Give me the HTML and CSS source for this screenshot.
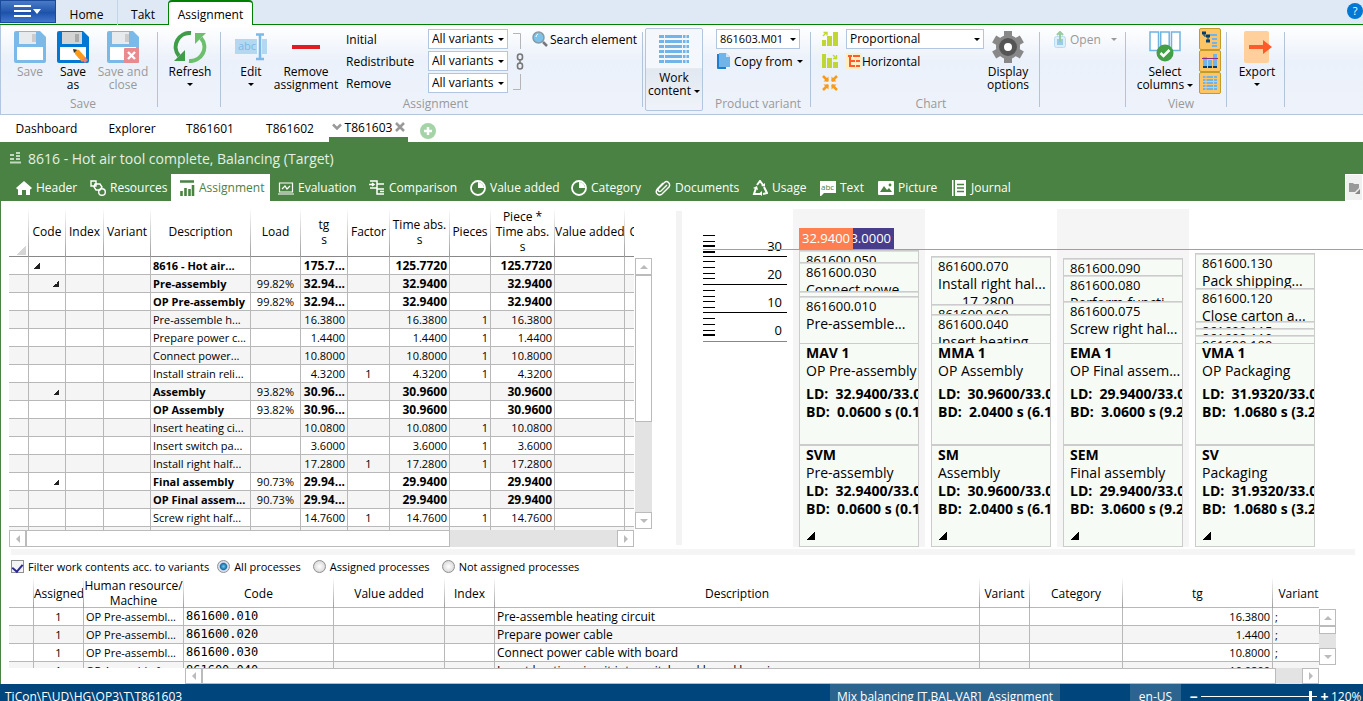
FILE: index.html
```html
<!DOCTYPE html>
<html lang="en">
<head>
<meta charset="utf-8">
<title>TiCon - Assignment</title>
<link rel="stylesheet" href="styles.css">
</head>
<body>
<div class="app">
<header class="menubar">
  <button class="app-menu" aria-label="Application menu"><svg width="28" height="14" viewBox="0 0 28 14"><path d="M0 1h17M0 6h17M0 11h17" stroke="#fff" stroke-width="2"/><path d="M19 4h8l-4 5z" fill="#fff"/></svg></button>
  <nav class="menu-tabs"><a href="#" class="m-home">Home</a><a href="#" class="m-takt">Takt</a><a href="#" class="m-active">Assignment</a></nav>
  <button class="help" aria-label="Help">?</button>
</header>

<div class="ribbon">
  <section class="group g-save">
    <div class="tools">
      <button class="big off w44"><svg width="32" height="32" viewBox="0 0 32 32"><path d="M2 0h24l6 6v24q0 2-2 2H2q-2 0-2-2V2q0-2 2-2z" fill="#7bb9e8"/><path d="M5 1h17v12H5z" fill="#e8ebee"/><path d="M18 3h4v8h-4z" fill="#ccc"/><path d="M3 16h26v13H3z" fill="#fff"/></svg><span>Save</span></button>
      <button class="big w42"><svg width="32" height="32" viewBox="0 0 32 32"><path d="M2 0h24l6 6v24q0 2-2 2H2q-2 0-2-2V2q0-2 2-2z" fill="#0078d4"/><path d="M5 1h20v12H5z" fill="#d4d4d4"/><path d="M18 3h4v8h-4z" fill="#aaa"/><path d="M3 16h26v13H3z" fill="#fff"/><path d="M17 18l5 1 7 8-4 4-7-8z" fill="#fb9a1a"/><path d="M16 18l4 1-3 3z" fill="#333"/><path d="M28 26l3 3-3 3-3-3z" fill="#e88080"/></svg><span>Save<br>as</span></button>
      <button class="big off w58"><svg width="32" height="32" viewBox="0 0 32 32"><path d="M2 0h24l6 6v24q0 2-2 2H2q-2 0-2-2V2q0-2 2-2z" fill="#7bb9e8"/><path d="M5 1h17v12H5z" fill="#e8ebee"/><path d="M18 3h4v8h-4z" fill="#ccc"/><path d="M3 16h26v13H3z" fill="#fff"/><rect x="17" y="17" width="15" height="15" rx="1" fill="#e88a8e"/><path d="M21 21l7 7M28 21l-7 7" stroke="#fff" stroke-width="2.4"/></svg><span>Save and<br>close</span></button>
    </div>
    <h2>Save</h2>
  </section>
  <section class="group g-refresh">
    <div class="tools"><button class="big w60"><svg width="34" height="32" viewBox="0 0 34 32"><path d="M18 2A14 14 0 0 0 6 25" fill="none" stroke="#3f9c4b" stroke-width="4"/><path d="M12 19v11H1z" fill="#3f9c4b"/><path d="M16 30A14 14 0 0 0 28 7" fill="none" stroke="#6cbf6c" stroke-width="4"/><path d="M22 13V2h11z" fill="#6cbf6c"/></svg><span>Refresh</span><i class="caret"></i></button></div>
  </section>
  <section class="group g-assign">
    <div class="tools">
      <button class="big w46"><svg width="32" height="32" viewBox="0 0 32 32"><path d="M0 8h22v15H0zM27 8h5v15h-5z" fill="#b5d8f1"/><text x="3" y="19" class="t-abc">abc</text><path d="M21 3.500h8M25 4v24M21 28h8" stroke="#7bb9e8" stroke-width="2.500" fill="none"/></svg><span>Edit</span><i class="caret"></i></button>
      <button class="big w64"><svg width="32" height="32" viewBox="0 0 32 32"><path d="M2 14h28v4H2z" fill="#e31b23"/></svg><span>Remove<br>assignment</span></button>
      <div class="form">
        <label for="v1">Initial</label><span class="sel"><select id="v1"><option>All variants</option></select></span>
        <label for="v2">Redistribute</label><span class="sel"><select id="v2"><option>All variants</option></select></span>
        <label for="v3">Remove</label><span class="sel"><select id="v3"><option>All variants</option></select></span>
      </div>
      <svg class="link-icon" width="12" height="60" viewBox="0 0 12 60"><path d="M0 1.500h7.500V17M0 57.500h7.500V42" fill="none" stroke="#b5b5b5"/><rect x="4.500" y="22" width="5" height="6" rx="2.500" fill="none" stroke="#777" stroke-width="1.600"/><rect x="4.500" y="31" width="5" height="6" rx="2.500" fill="none" stroke="#777" stroke-width="1.600"/><path d="M7 27v5" stroke="#777" stroke-width="1.500"/></svg>
      <button class="small search"><svg width="16" height="16" viewBox="0 0 16 16"><path d="M11 11l4 4" stroke="#777" stroke-width="2.500"/><circle cx="6.500" cy="6.500" r="5.500" fill="#7bc3ec" stroke="#8a9aa5" stroke-width="1.500"/><path d="M4 6q0-2 2-3" stroke="#fff" fill="none"/></svg>Search element</button>
    </div>
    <h2>Assignment</h2>
  </section>
  <section class="group g-variant">
    <div class="tools">
      <button class="big checked"><svg width="30" height="29" viewBox="0 0 30 29"><path d="M0 1.500h30M0 6.500h30M0 11.500h30M0 16.500h30M0 21.500h30M0 26.500h30" stroke="#70b4e8" stroke-width="3"/><path d="M5.500 0v29M23.500 0v29M27 0v29" stroke="#eef3fa"/></svg><span>Work<br>content <i class="caret"></i></span></button>
      <div class="stack variant">
        <span class="sel"><select aria-label="Product variant"><option>861603.M01</option></select></span>
        <button class="small"><svg width="13" height="16" viewBox="0 0 13 16"><path d="M0 1h9v15H1q-1 0-1-1z" fill="#1a7fd0"/><path d="M2 0h7l4 4v10H2z" fill="#70b4e8"/><path d="M9 0l4 4H9z" fill="#cfe6f7"/></svg>Copy from <i class="caret"></i></button>
      </div>
    </div>
    <h2 class="h-variant">Product variant</h2>
  </section>
  <section class="group g-chart">
    <div class="tools">
      <div class="stack icons">
        <button class="ico" aria-label="Sort ascending"><svg width="16" height="16" viewBox="0 0 16 16"><path d="M0 9h4v6H0zM5 5h5v10H5zM11 1h5v14h-5z" fill="#bfd730"/><path d="M1 5l3-3M1.500 1.500H5v3" stroke="#bfd730" stroke-width="1.400" fill="none"/></svg></button>
        <button class="ico" aria-label="Sort descending"><svg width="16" height="16" viewBox="0 0 16 16"><path d="M0 1h4v14H0zM5 5h5v10H5zM11 9h5v6h-5z" fill="#bfd730"/><path d="M11 2l3 3M11 5.500h3.500V2" stroke="#bfd730" stroke-width="1.400" fill="none"/></svg></button>
        <button class="ico" aria-label="Fit"><svg width="16" height="16" viewBox="0 0 16 16"><path d="M1 1l5 5M15 1l-5 5M1 15l5-5M15 15l-5-5" stroke="#fb9a1a" stroke-width="2.500"/><path d="M6.500 1.500v5h-5zM9.500 1.500v5h5zM6.500 14.500v-5h-5zM9.500 14.500v-5h5z" fill="#fb9a1a"/></svg></button>
      </div>
      <div class="stack mode">
        <span class="sel"><select aria-label="Chart type"><option>Proportional</option></select></span>
        <button class="small"><svg width="16" height="16" viewBox="0 0 16 16"><path d="M0 0h16v16H0z" fill="#ffeec2"/><path d="M2 3h4M7 3h7M6 8h3M10 8h4M6 13h3M10 13h4M4 3v10h2M4 8h2" fill="none" stroke="#ff5a2a" stroke-width="2"/></svg>Horizontal</button>
      </div>
      <button class="big w48"><svg width="32" height="32" viewBox="0 0 32 32"><g fill="#888"><circle cx="16" cy="16" r="12"/><path d="M12 0h8v32h-8z"/><path d="M12 0h8v32h-8z" transform="rotate(60 16 16)"/><path d="M12 0h8v32h-8z" transform="rotate(120 16 16)"/></g><circle cx="16" cy="16" r="6.500" fill="#fff" stroke="#555" stroke-width="5"/></svg><span>Display<br>options</span></button>
    </div>
    <h2 class="h-chart">Chart</h2>
  </section>
  <section class="group g-open">
    <div class="tools"><button class="small off"><svg width="12" height="17" viewBox="0 0 12 17"><rect x=".5" y="5.500" width="11" height="11" rx="2" fill="#dceefa" stroke="#b9dcf3"/><path d="M3 8h6v6H3z" fill="#9ccbe8"/><path d="M6 1v10M3 4l3-3 3 3" fill="none" stroke="#97cba0" stroke-width="2"/></svg>Open <i class="caret"></i></button></div>
  </section>
  <section class="group g-view">
    <div class="tools">
      <button class="big w60"><svg width="32" height="32" viewBox="0 0 32 32"><g fill="#fff" stroke="#70b4e0" stroke-width="1.500"><path d="M1 1h8.500v18.500H1zM11.700 1h8.500v18.500h-8.500zM22.500 1H31v18.500h-8.500z"/></g><circle cx="16" cy="22" r="8.500" fill="#43a047"/><path d="M11.500 22l3 3 6-6" fill="none" stroke="#fff" stroke-width="2.500"/></svg><span>Select<br>columns <i class="caret"></i></span></button>
      <div class="toggles">
        <button aria-label="Tree view"><svg width="16" height="16" viewBox="0 0 16 16"><path d="M8 4h7M10 8h5M10 12h5M10 15h5" stroke="#70b4e8" stroke-width="2"/><path d="M0 2h4M4 5h4M4 10h4" stroke="#003f72" stroke-width="3"/><path d="M2 3v2h3M6 6v4" stroke="#003f72" fill="none"/></svg></button>
        <button aria-label="Chart view"><svg width="16" height="16" viewBox="0 0 16 16"><path d="M1 4h4v10H1zM6 7h4v7H6zM11 1h4v13h-4z" fill="#70b4e8"/><path d="M1 13h4v2H1zM6 13h4v2H6zM11 13h4v2h-4z" fill="#003f72"/><path d="M0 5.500h16" stroke="#8a2a8a" stroke-width="1"/></svg></button>
        <button aria-label="Table view"><svg width="16" height="16" viewBox="0 0 16 16"><path d="M1 2h14M1 5h14M1 8h14M1 11h14M1 14h14" stroke="#70b4e8" stroke-width="2"/><path d="M4 0v16M11.500 0v16" stroke="#fdc566"/></svg></button>
      </div>
    </div>
    <h2 class="h-view">View</h2>
  </section>
  <section class="group g-export">
    <div class="tools"><button class="big w48"><svg width="32" height="32" viewBox="0 0 32 32"><rect x="3" width="25" height="32" rx="2" fill="#ffd09b"/><path d="M8 14h14V9l9 7-9 7v-5H8z" fill="#ff5a2a"/></svg><span>Export</span><i class="caret"></i></button></div>
  </section>
</div>

<nav class="doctabs">
  <a href="#" class="d-dash">Dashboard</a><a href="#" class="d-expl">Explorer</a><a href="#" class="d-one">T861601</a><a href="#" class="d-two">T861602</a>
  <a href="#" class="d-active"><svg width="10" height="8" viewBox="0 0 10 8"><path d="M1 1.500l4 4 4-4" fill="none" stroke="#999" stroke-width="2.500"/></svg>T861603<svg width="10" height="10" viewBox="0 0 10 10"><path d="M1 1l8 8M9 1L1 9" stroke="#999" stroke-width="2.500"/></svg></a>
  <button class="add" aria-label="Add tab"><svg width="16" height="16" viewBox="0 0 16 16"><circle cx="8" cy="8" r="8" fill="#a3d3a6"/><path d="M8 4v8M4 8h8" stroke="#fff" stroke-width="2.500"/></svg></button>
</nav>

<div class="titlebar"><svg width="11" height="12" viewBox="0 0 11 12"><path d="M0 3h4M0 7h4M6 1h4M6 4h4M6 7h4M0 10.500h11" stroke="#c4d8c1" stroke-width="2"/></svg><h1>8616 - Hot air tool complete, Balancing (Target)</h1></div>
<nav class="views">
  <div class="view-tabs">
  <a href="#"><svg viewBox="0 0 16 16"><path d="M8 1l8 7-1.500 1.500L14 9v6h-4v-5H6v5H2V9l-.5.5L0 8z" fill="#fff"/></svg>Header</a>
  <a href="#"><svg viewBox="0 0 16 16"><g fill="none" stroke="#fff" stroke-width="1.400"><path d="M1 1h5v5H1z"/><path d="M5 4h5l2 3-2 3H6L4 7z"/><circle cx="12" cy="12" r="3.300"/></g></svg>Resources</a>
  <a href="#" class="active"><svg viewBox="0 0 16 16"><path d="M1 1.500h14M2.500 11v5M6.500 8v8M10.500 9v7M14 5v11" stroke="#4a8243" stroke-width="2.600"/></svg>Assignment</a>
  <a href="#"><svg viewBox="0 0 16 16"><path d="M1.500 3h13v9h-13zM0 14h16M4 9l3-3 2 3 3-3" fill="none" stroke="#fff" stroke-width="1.200"/></svg>Evaluation</a>
  <a href="#"><svg viewBox="0 0 16 16"><path d="M1 1h7v3h7M1 8h7V4M0 4.500h5M8 8v6h7M8 9h7M15 11.500h-4M3 3l2 1.500L3 6" fill="none" stroke="#fff" stroke-width="1.500"/></svg>Comparison</a>
  <a href="#"><svg viewBox="0 0 16 16"><circle cx="8" cy="8" r="7" fill="none" stroke="#fff" stroke-width="1.800"/><path d="M8 8V2a6 6 0 0 1 6 6z" fill="#fff"/></svg>Value added</a>
  <a href="#"><svg viewBox="0 0 16 16"><circle cx="8" cy="8" r="7" fill="none" stroke="#fff" stroke-width="1.800"/><path d="M8 8V2a6 6 0 0 1 6 6z" fill="#fff"/></svg>Category</a>
  <a href="#"><svg viewBox="0 0 16 16"><path d="M12 5l-6 6q-1.500 1-2.500 0t0-2.500l6-6q2-2 4 0t.5 4.500l-7 7q-2.500 2-4.700 0t0-5L8 3" fill="none" stroke="#fff" stroke-width="1.400"/></svg>Documents</a>
  <a href="#"><svg viewBox="0 0 16 16"><path d="M5 5l3-4 3 4M12 7l3 6-4 1M9 14H2l2-6" fill="none" stroke="#fff" stroke-width="2"/><path d="M9 6l4 .5V3zM10 11v5l-3-2.500zM1 8l4-2 1 4z" fill="#fff"/></svg>Usage</a>
  <a href="#"><svg viewBox="0 0 16 16"><path d="M0 1h16v12H4l-3 3H0z" fill="#fff"/><text x="1" y="10" class="t-abc2">abc</text></svg>Text</a>
  <a href="#"><svg viewBox="0 0 16 16"><rect y="1" width="16" height="14" rx="1" fill="#fff"/><path d="M2 12l4-6 3 4 2-2 3 4z" fill="#4a8243"/><circle cx="12" cy="5" r="1.400" fill="#4a8243"/></svg>Picture</a>
  <a href="#"><svg viewBox="0 0 16 16"><path d="M1 0h1.500v16H1zM4 0h11v16H4z" fill="#fff"/><path d="M6 4.500h7M6 8h7M6 11.500h7" stroke="#4a8243" stroke-width="1.500"/></svg>Journal</a>
  </div>
  <button class="side-tool" aria-label="Folder"><svg width="11" height="12" viewBox="0 0 11 12"><path d="M0 1h4l1 1h5v4l-4 4H0z" fill="#999"/><path d="M6 12l5-5v5z" fill="#888"/></svg></button>
</nav>

<main class="work">
  <div class="upper">
    <section class="tree-panel">
      <div class="clip">
      <table class="grid tree">
        <colgroup><col class="c20"><col class="c37"><col class="c38"><col class="c47"><col class="c100"><col class="c50"><col class="c47"><col class="c42"><col class="c60"><col class="c41"><col class="c64"><col class="c70"><col class="c60"></colgroup>
        <thead><tr><th><i class="corner"></i></th><th>Code</th><th>Index</th><th>Variant</th><th>Description</th><th>Load</th><th>tg<br>s</th><th>Factor</th><th>Time abs.<br>s</th><th>Pieces</th><th>Piece *<br>Time abs.<br>s</th><th>Value added</th><th>Category</th></tr></thead>
        <tbody>
        <tr class="b"><td></td><td class="lv0"><i class="node"></i></td><td></td><td></td><td>8616 - Hot air...</td><td></td><td>175.7...</td><td></td><td>125.7720</td><td></td><td>125.7720</td><td></td><td></td></tr>
        <tr class="b"><td></td><td class="lv1"><i class="node"></i></td><td></td><td></td><td>Pre-assembly</td><td>99.82%</td><td>32.94...</td><td></td><td>32.9400</td><td></td><td>32.9400</td><td></td><td></td></tr>
        <tr class="b"><td></td><td></td><td></td><td></td><td>OP Pre-assembly</td><td>99.82%</td><td>32.94...</td><td></td><td>32.9400</td><td></td><td>32.9400</td><td></td><td></td></tr>
        <tr><td></td><td></td><td></td><td></td><td>Pre-assemble h...</td><td></td><td>16.3800</td><td></td><td>16.3800</td><td>1</td><td>16.3800</td><td></td><td></td></tr>
        <tr><td></td><td></td><td></td><td></td><td>Prepare power c...</td><td></td><td>1.4400</td><td></td><td>1.4400</td><td>1</td><td>1.4400</td><td></td><td></td></tr>
        <tr><td></td><td></td><td></td><td></td><td>Connect power...</td><td></td><td>10.8000</td><td></td><td>10.8000</td><td>1</td><td>10.8000</td><td></td><td></td></tr>
        <tr><td></td><td></td><td></td><td></td><td>Install strain reli...</td><td></td><td>4.3200</td><td>1</td><td>4.3200</td><td>1</td><td>4.3200</td><td></td><td></td></tr>
        <tr class="b"><td></td><td class="lv1"><i class="node"></i></td><td></td><td></td><td>Assembly</td><td>93.82%</td><td>30.96...</td><td></td><td>30.9600</td><td></td><td>30.9600</td><td></td><td></td></tr>
        <tr class="b"><td></td><td></td><td></td><td></td><td>OP Assembly</td><td>93.82%</td><td>30.96...</td><td></td><td>30.9600</td><td></td><td>30.9600</td><td></td><td></td></tr>
        <tr><td></td><td></td><td></td><td></td><td>Insert heating ci...</td><td></td><td>10.0800</td><td></td><td>10.0800</td><td>1</td><td>10.0800</td><td></td><td></td></tr>
        <tr><td></td><td></td><td></td><td></td><td>Insert switch pa...</td><td></td><td>3.6000</td><td></td><td>3.6000</td><td>1</td><td>3.6000</td><td></td><td></td></tr>
        <tr><td></td><td></td><td></td><td></td><td>Install right half...</td><td></td><td>17.2800</td><td>1</td><td>17.2800</td><td>1</td><td>17.2800</td><td></td><td></td></tr>
        <tr class="b"><td></td><td class="lv1"><i class="node"></i></td><td></td><td></td><td>Final assembly</td><td>90.73%</td><td>29.94...</td><td></td><td>29.9400</td><td></td><td>29.9400</td><td></td><td></td></tr>
        <tr class="b"><td></td><td></td><td></td><td></td><td>OP Final assem...</td><td>90.73%</td><td>29.94...</td><td></td><td>29.9400</td><td></td><td>29.9400</td><td></td><td></td></tr>
        <tr><td></td><td></td><td></td><td></td><td>Screw right half...</td><td></td><td>14.7600</td><td>1</td><td>14.7600</td><td>1</td><td>14.7600</td><td></td><td></td></tr>
        <tr><td></td><td></td><td></td><td></td><td></td><td></td><td></td><td></td><td></td><td></td><td></td><td></td><td></td></tr>
        </tbody>
      </table>
      </div>
      <div class="vscroll tree-v"><button aria-label="Scroll up"><i class="up"></i></button><div class="thumb"></div><div class="track"></div><button aria-label="Scroll down"><i class="down"></i></button></div>
      <div class="hscroll tree-h"><button aria-label="Scroll left"><i class="left"></i></button><div class="thumb"></div><div class="track"></div><button aria-label="Scroll right"><i class="right"></i></button></div>
    </section>
    <div class="vsplit"></div>
    <section class="chart">
      <div class="scale">
        <div class="step"><svg width="12" height="28" viewBox="0 0 12 28"><path d="M0 6.500h12M0 12.500h12M0 22.500h12" stroke="#000"/><path d="M0 17h12M0 23h12" stroke="#000" stroke-width="2"/></svg>30</div>
        <div class="step"><svg width="12" height="28" viewBox="0 0 12 28"><path d="M0 4.500h12M0 10.500h12M0 16.500h12M0 21.500h12" stroke="#000"/></svg>20</div>
        <div class="step"><svg width="12" height="28" viewBox="0 0 12 28"><path d="M0 5.500h12M0 11.500h12M0 16.500h12M0 22.500h12" stroke="#000"/></svg>10</div>
        <div class="step last"><svg width="12" height="28" viewBox="0 0 12 28"><path d="M0 5.500h12M0 11.500h12M0 17.500h12" stroke="#000"/><path d="M0 22h12" stroke="#000" stroke-width="2"/></svg>0</div>
      </div>
      <div class="station shade">
        <div class="item" style="height:12px">861600.050</div>
        <div class="item" style="height:29px">861600.030<span>Connect powe...</span></div>
        <div class="item" style="height:5px"></div>
        <div class="item" style="height:47px">861600.010<span>Pre-assemble...</span></div>
        <div class="card"><b>MAV 1</b><span>OP Pre-assembly</span><b class="ld">LD:&nbsp; 32.9400/33.0000</b><b>BD:&nbsp; 0.0600 s (0.18%)</b></div>
        <div class="card"><b>SVM</b><span>Pre-assembly</span><b>LD:&nbsp; 32.9400/33.0000</b><b>BD:&nbsp; 0.0600 s (0.18%)</b><i class="node"></i></div>
      </div>
      <div class="station">
        <div class="item" style="height:48px">861600.070<span>Install right hal...</span><span class="num">17.2800</span></div>
        <div class="item" style="height:10px">861600.060</div>
        <div class="item" style="height:29px">861600.040<span>Insert heating...</span></div>
        <div class="card"><b>MMA 1</b><span>OP Assembly</span><b class="ld">LD:&nbsp; 30.9600/33.0000</b><b>BD:&nbsp; 2.0400 s (6.18%)</b></div>
        <div class="card"><b>SM</b><span>Assembly</span><b>LD:&nbsp; 30.9600/33.0000</b><b>BD:&nbsp; 2.0400 s (6.18%)</b><i class="node"></i></div>
      </div>
      <div class="station shade">
        <div class="item" style="height:17px">861600.090</div>
        <div class="item" style="height:26px">861600.080<span>Perform functi...</span></div>
        <div class="item" style="height:42px">861600.075<span>Screw right hal...</span></div>
        <div class="card"><b>EMA 1</b><span>OP Final assem...</span><b class="ld">LD:&nbsp; 29.9400/33.0000</b><b>BD:&nbsp; 3.0600 s (9.27%)</b></div>
        <div class="card"><b>SEM</b><span>Final assembly</span><b>LD:&nbsp; 29.9400/33.0000</b><b>BD:&nbsp; 3.0600 s (9.27%)</b><i class="node"></i></div>
      </div>
      <div class="station">
        <div class="item" style="height:35px">861600.130<span>Pack shipping...</span></div>
        <div class="item" style="height:33px">861600.120<span>Close carton a...</span></div>
        <div class="item" style="height:7px">861600.115</div>
        <div class="item" style="height:7px">861600.110</div>
        <div class="item" style="height:8px">861600.100</div>
        <div class="card"><b>VMA 1</b><span>OP Packaging</span><b class="ld">LD:&nbsp; 31.9320/33.0000</b><b>BD:&nbsp; 1.0680 s (3.24%)</b></div>
        <div class="card"><b>SV</b><span>Packaging</span><b>LD:&nbsp; 31.9320/33.0000</b><b>BD:&nbsp; 1.0680 s (3.24%)</b><i class="node"></i></div>
      </div>
      <div class="limit"></div>
      <div class="tag target">33.0000</div><div class="tag actual">32.9400</div>
    </section>
  </div>
  <div class="hsplit"></div>
  <div class="filters">
    <input type="checkbox" id="flt" checked><label for="flt" class="lf">Filter work contents acc. to variants</label>
    <input type="radio" name="proc" id="p1" checked><label for="p1" class="l1">All processes</label>
    <input type="radio" name="proc" id="p2"><label for="p2" class="l2">Assigned processes</label>
    <input type="radio" name="proc" id="p3"><label for="p3">Not assigned processes</label>
  </div>
  <section class="list-panel">
    <div class="clip">
    <table class="grid list">
      <colgroup><col class="c25"><col class="c50"><col class="c100"><col class="c150"><col class="c111"><col class="c50"><col><col class="c50"><col class="c93"><col class="c150"><col class="c52"></colgroup>
      <thead><tr><th></th><th>Assigned</th><th>Human resource/<br>Machine</th><th>Code</th><th>Value added</th><th>Index</th><th>Description</th><th>Variant</th><th>Category</th><th>tg</th><th>Variant</th></tr></thead>
      <tbody>
      <tr><td></td><td>1</td><td>OP Pre-assembl...</td><td>861600.010</td><td></td><td></td><td>Pre-assemble heating circuit</td><td></td><td></td><td>16.3800</td><td>;</td></tr>
      <tr><td></td><td>1</td><td>OP Pre-assembl...</td><td>861600.020</td><td></td><td></td><td>Prepare power cable</td><td></td><td></td><td>1.4400</td><td>;</td></tr>
      <tr><td></td><td>1</td><td>OP Pre-assembl...</td><td>861600.030</td><td></td><td></td><td>Connect power cable with board</td><td></td><td></td><td>10.8000</td><td>;</td></tr>
      <tr><td></td><td>1</td><td>OP Assembly fo...</td><td>861600.040</td><td></td><td></td><td>Insert heating circuit into switch and board housing</td><td></td><td></td><td>10.0800</td><td>;</td></tr>
      </tbody>
    </table>
    </div>
    <div class="vscroll list-v"><button aria-label="Scroll up"><i class="up"></i></button><div class="thumb"></div><div class="track"></div><button aria-label="Scroll down"><i class="down"></i></button></div>
    <div class="hscroll list-h"><button aria-label="Scroll left"><i class="left"></i></button><div class="thumb"></div><div class="track"></div><button aria-label="Scroll right"><i class="right"></i></button></div>
  </section>
</main>

<footer class="status"><span class="path">TiCon\F\UD\HG\OP3\T\T861603</span><span class="cell mix">Mix balancing [T.BAL.VAR]&nbsp; Assignment</span><span class="cell lang">en-US</span>
  <span class="zoom"><button aria-label="Zoom out">−</button><input type="range" min="0" max="100" value="96" aria-label="Zoom"><button aria-label="Zoom in">+</button></span><span class="pct">120%</span></footer>
</div>
</body>
</html>
```
FILE: styles.css
```css
* { box-sizing: border-box; }
html, body { height: 100%; }
body { margin: 0; overflow: hidden; background: #fff; color: #000; font: 12px/15px "Open Sans", "Noto Sans", sans-serif; }
button, select, input { font: inherit; color: inherit; margin: 0; }
button { background: none; border: 0; padding: 0; }
a { color: inherit; text-decoration: none; }
h1, h2 { margin: 0; font-weight: 400; }
svg { display: block; flex: none; }
.app { height: 100%; display: flex; flex-direction: column; }

/* menu bar */
.menubar { flex: none; height: 25px; display: flex; background: #dfe9f5; border-bottom: 1px solid #008000; }
.app-menu { width: 56px; height: 23px; border: 1px solid #1a4a9c; background: linear-gradient(#4a7bc8, #2458ae 50%, #1a4fa8 51%, #3f77cc); display: flex; justify-content: center; align-items: center; }
.menu-tabs { flex: 1; display: flex; }
.menu-tabs a { height: 25px; padding-top: 7px; text-align: center; }
.m-home { width: 62px; border-right: 1px solid #c5d3e6; }
.m-takt { width: 50px; }
.m-active { width: 85px; background: #fff; border: 1px solid #008000; border-width: 2px 1px 0; border-radius: 4px 4px 0 0; }
.menu-tabs .m-active { padding-top: 5px; }
.help { width: 16px; height: 16px; margin-top: 3px; border-radius: 8px; background: #0078d4; color: #fff; font-size: 11px; line-height: 16px; }

/* ribbon */
.ribbon { flex: none; height: 90px; display: flex; background: linear-gradient(#fff, #ebf1fa 40%, #eef3fb); border-bottom: 1px solid #b3c6e0; border-left: 1px solid #b3c6e0; }
.group { position: relative; flex: none; display: flex; flex-direction: column; justify-content: space-between; padding: 3px 0 3px 0; }
.group::after { content: ""; position: absolute; right: 0; top: 7px; width: 1px; height: 75px; background: #b3c3da; }
.group h2 { color: #999; text-align: center; font-size: 12px; line-height: 15px; }
.tools { display: flex; align-items: flex-start; }
.g-save { width: 157px; padding-left: 7px; }
.g-refresh { width: 63px; padding-left: 2px; }
.g-assign { width: 422px; padding-left: 7px; }
.g-variant { width: 168px; padding-left: 2px; }
.g-chart { width: 229px; padding-left: 11px; }
.g-open { width: 86px; padding-left: 14px; }
.g-view { width: 101px; padding-left: 9px; }
.g-export { width: 58px; padding-left: 6px; }
.h-variant { padding-left: 60px; }
.big { flex: none; display: flex; flex-direction: column; align-items: center; padding-top: 3px; line-height: 13px; }
.big span { margin-top: 2px; white-space: nowrap; }
.off { color: #999; }
.w42 { width: 42px; } .w44 { width: 44px; } .w46 { width: 46px; } .w48 { width: 48px; } .w58 { width: 58px; } .w60 { width: 60px; } .w64 { width: 64px; }
.caret { display: inline-block; border: 3px solid transparent; border-top-color: currentColor; border-bottom: 0; vertical-align: middle; }
.big > .caret { margin-top: 5px; }
.checked { width: 58px; height: 83px; padding-top: 6px; border: 1px solid #b3c6e0; border-radius: 2px; background: linear-gradient(#f4f8fd 48%, #e2e8f0 49%, #eff3f9); }
.checked span { margin-top: 7px; }
.g-variant .tools { margin-bottom: -21px; }
.form { display: grid; grid-template-columns: 82px 80px; row-gap: 2px; align-items: center; margin: 1px 5px 0 8px; }
.sel { position: relative; display: block; height: 20px; }
.sel::after { content: ""; position: absolute; right: 4px; top: 9px; border: 3px solid transparent; border-top-color: #000; border-bottom: 0; }
.sel select { appearance: none; width: 100%; height: 20px; padding: 0 3px; border: 1px solid #b3c6e0; border-radius: 0; background: #fff; line-height: 18px; }
.variant .sel select { font-size: 11px; }
.link-icon { margin-top: 4px; }
.small { display: flex; align-items: center; gap: 2px; height: 20px; white-space: nowrap; }
.search { margin: 1px 0 0 7px; }
.stack { display: flex; flex-direction: column; gap: 2px; margin-top: 1px; }
.variant { width: 84px; margin-left: 13px; }
.variant .small { gap: 4px; padding-left: 1px; }
.icons { width: 16px; }
.ico { height: 20px; display: flex; align-items: center; }
.mode { width: 138px; margin: 1px 0 0 8px; }
.mode .small { gap: 0; }
.g-open .small { margin-top: 1px; gap: 4px; }
.g-open .caret { margin-left: 6px; }
.toggles { margin-left: 4px; display: flex; flex-direction: column; }
.toggles button { width: 22px; height: 22px; display: flex; align-items: center; justify-content: center; border: 1px solid #c29b29; border-radius: 2px; background: #fdc566; }
.t-abc { font: 11px "Open Sans", sans-serif; fill: #7bb9e8; }
.t-abc2 { font: 8px "Open Sans", sans-serif; fill: #4a8243; }

/* document tabs */
.doctabs { flex: none; height: 27px; display: flex; padding-left: 6px; }
.doctabs a { height: 27px; padding-top: 6px; text-align: center; }
.d-dash { width: 81px; } .d-expl { width: 90px; } .d-one { width: 66px; }
.d-two { width: 94px; }
.doctabs a.d-active { width: 79px; margin-left: -8px; padding: 2px 3px 0; display: flex; align-items: center; justify-content: space-between; border-bottom: 5px solid #4a8243; }
.add { margin-left: 12px; padding-top: 5px; }

/* title + view tabs */
.titlebar { flex: none; height: 32px; display: flex; align-items: center; gap: 7px; padding-left: 10px; background: #4a8243; color: #e6efe4; }
.titlebar h1 { font-size: 14px; line-height: 20px; padding-top: 2px; }
.views { flex: none; height: 27px; display: flex; justify-content: space-between; background: #4a8243; color: #fff; }
.view-tabs { display: grid; grid-template-columns: 74px 89px 99px 91px 101px 101px 84px 97px 68px 58px 73px 74px; padding-left: 8px; }
.view-tabs a { display: flex; align-items: center; gap: 4px; padding-left: 8px; white-space: nowrap; }
.view-tabs svg { width: 16px; height: 16px; }
.view-tabs .active { background: #fff; color: #4a8243; }
.side-tool { width: 18px; background: #f0f0f0; border: 1px solid #fff; display: flex; align-items: center; justify-content: center; }

/* work area */
.work { flex: 1; min-height: 0; display: flex; flex-direction: column; border-left: 1px solid #4a8243; padding-left: 8px; }
.upper { flex: 1; min-height: 0; display: grid; grid-template-columns: minmax(0, 667fr) 6px minmax(0, 681fr); padding-top: 8px; }
.clip { overflow: hidden; min-width: 0; min-height: 0; }
.grid { table-layout: fixed; border-collapse: separate; border-spacing: 0; }
.grid th { font-weight: 400; padding: 0; line-height: 15px; white-space: nowrap; overflow: hidden; border-right: 1px solid; border-image: linear-gradient(#fff, #999) 1; border-bottom: 0; background: linear-gradient(#888, #888) bottom / 100% 1px no-repeat; }
.grid td { height: 18px; padding: 0 2px; line-height: 17px; font-size: 11px; white-space: nowrap; overflow: hidden; border-right: 1px solid #b8b8b8; border-bottom: 1px solid #b8b8b8; }
.grid tbody tr:nth-child(even) { background: #f5f5f5; }
.c20 { width: 20px; } .c25 { width: 25px; } .c37 { width: 37px; } .c38 { width: 38px; } .c41 { width: 41px; } .c42 { width: 42px; } .c47 { width: 47px; } .c50 { width: 50px; } .c52 { width: 52px; } .c60 { width: 60px; } .c64 { width: 64px; } .c70 { width: 70px; } .c93 { width: 93px; } .c100 { width: 100px; } .c111 { width: 111px; } .c150 { width: 150px; }

.tree-panel { display: grid; grid-template-columns: minmax(0, 1fr) 17px; grid-template-rows: minmax(0, 1fr) 17px; column-gap: 1px; padding-right: 24px; min-height: 0; }
.tree { width: 676px; }
.tree th { height: 48px; padding-bottom: 3px; }
.tree th:first-child { padding-bottom: 0; }
.tree td:nth-child(n+6) { text-align: right; }
.tree td:nth-child(8) { text-align: center; }
.tree td:nth-child(6) { padding-right: 6px; }
.tree .b td { font-weight: 700; }
.tree .b td:nth-child(n+7) { font-size: 12px; }
.tree .b td:nth-child(6) { font-weight: 400; }
.tree td:nth-child(-n+4) { line-height: 0; }
.corner { display: block; width: 9px; height: 9px; margin: 34px 0 0 8px; background: linear-gradient(135deg, transparent 50%, #d5d5d5 50%); }
.node { display: inline-block; width: 6px; height: 6px; background: linear-gradient(135deg, transparent 50%, #222 50%); }
.lv0 .node { margin-left: 3px; } .lv1 .node { margin-left: 22px; }

.vscroll, .hscroll { display: flex; }
.vscroll { flex-direction: column; width: 17px; }
.vscroll button, .hscroll button { flex: none; width: 17px; height: 17px; display: flex; align-items: center; justify-content: center; border: 1px solid #bbb; background: #fff; }
.thumb { background: #fff; border: 1px solid #bbb; }
.track { flex: 1; background: #e3e3e3; }
.vscroll i, .hscroll i { border: 4px solid transparent; }
.vscroll .up { border-bottom-color: #bbb; border-top: 0; }
.vscroll .down { border-top-color: #bbb; border-bottom: 0; }
.hscroll .left { border-right-color: #bbb; border-left: 0; }
.hscroll .right { border-left-color: #bbb; border-right: 0; }
.tree-v { padding: 49px 0 1px; }
.tree-v .thumb { flex: 0 0 147px; }
.tree-h .thumb { flex: 0 0 424px; }
.tree-h { grid-column: 1; }
.vsplit { background: #f3f3f3; margin: 2px 0; }

/* balancing chart */
.chart { position: relative; display: flex; align-items: stretch; padding-left: 21px; min-height: 0; font-size: 13px; line-height: 18px; overflow: hidden; }
.scale { width: 84px; margin-right: 6px; padding-top: 20px; }
.step { height: 28px; display: flex; justify-content: space-between; border-bottom: 1px solid #000; padding-right: 5px; line-height: 34px; font-size: 13px; }
.step.last { height: 29px; border-bottom-color: #888; }
.station { flex: none; width: 132px; padding: 0 6px 0; display: flex; flex-direction: column; justify-content: flex-end; }
.shade { background: #f5f5f5; }
.item { flex: none; border: 1px solid #ccc; border-bottom: 0; box-shadow: inset 0 1px 0 #ddd; background: #f6fbf6; overflow: hidden; padding-left: 6px; white-space: nowrap; }
.item span { display: block; font-size: 14px; }
.item .num { padding-left: 24px; }
.card { flex: none; height: 102px; padding: 0 0 0 6px; display: flex; flex-direction: column; background: #f6fbf6; border: 1px solid #ccc; font-size: 14px; white-space: nowrap; overflow: hidden; }
.card .ld { margin-top: 5px; }
.card .node { margin: 14px 0 0 1px; width: 8px; height: 8px; background: linear-gradient(135deg, transparent 50%, #000 50%); }
.limit { position: absolute; left: 21px; right: 0; top: 39px; height: 2px; background: #ff7f50 content-box; padding-top: 1px; }
.tag { position: absolute; top: 19px; left: 117px; width: 54px; height: 21px; line-height: 21px; text-align: center; color: #fff; background: #ff7f50; }
.target { left: 158px; background: #483d8b; }

/* filters + list */
.hsplit { flex: none; height: 6px; margin: 2px 8px 0 2px; background: #f5f5f5; }
.filters { flex: none; height: 23px; display: flex; align-items: center; padding-left: 2px; gap: 4px; font-size: 11px; }
.filters input { appearance: none; width: 13px; height: 13px; border: 1px solid #8e8f8f; background: #f4f4f4; display: grid; place-items: center; }
.filters input[type=radio] { border-radius: 7px; background: radial-gradient(#fff, #ccc); }
.filters input[type=radio]:checked { background: radial-gradient(#6cc8f0, #1a6fa0 40%, #dde 55%); }
.filters input[type=checkbox]:checked::after { content: ""; width: 5px; height: 8px; border: solid #2a2a90; border-width: 0 2px 2px 0; transform: rotate(40deg); }
.filters .lf { margin-right: 4px; }
.filters .l1, .filters .l2 { margin-right: 8px; }
.list-panel { flex: none; height: 106px; display: grid; grid-template-columns: minmax(0, 1fr) 17px; grid-template-rows: 90px 16px; padding-right: 27px; }
.list { width: calc(100% + 6px); }
.list th { height: 30px; }
.list thead th { background-image: linear-gradient(#b8b8b8, #b8b8b8); }
.list td:nth-child(2) { text-align: center; }
.list td:nth-child(4) { font: 12px/17px "DejaVu Sans Mono", monospace; }
.list td:nth-child(7) { font-size: 12px; }
.list td:nth-child(10) { text-align: right; }
.list-v { padding: 31px 0 3px; }
.list-v .thumb { flex: 0 0 8px; }
.list-v button { height: 17px; }
.list-h { margin-left: 176px; }
.list-h .thumb { flex: 0 1 1074px; }
.list-h button { height: 16px; }

/* status bar */
.status { flex: none; height: 17px; overflow: hidden; display: flex; background: #00457c; color: #fff; line-height: 18px; white-space: nowrap; }
.path { flex: 1; padding: 4px 0 0 5px; }
.cell { height: 22px; padding-top: 4px; text-align: center; background: #2b648f; }
.mix { width: 230px; margin-right: 70px; }
.lang { width: 51px; }
.zoom { display: flex; width: 148px; padding: 3px 0 0 8px; height: 22px; align-items: center; gap: 3px; }
.zoom button { flex: none; width: 9px; font-weight: 700; font-size: 14px; line-height: 18px; }
.zoom input { flex: 1; min-width: 0; height: 12px; appearance: none; background: linear-gradient(#fff, #fff) center / 100% 1px no-repeat; }
.zoom input::-webkit-slider-thumb { appearance: none; width: 3px; height: 11px; background: #fff; }
.pct { width: 34px; padding: 4px 0 0 2px; }
```
